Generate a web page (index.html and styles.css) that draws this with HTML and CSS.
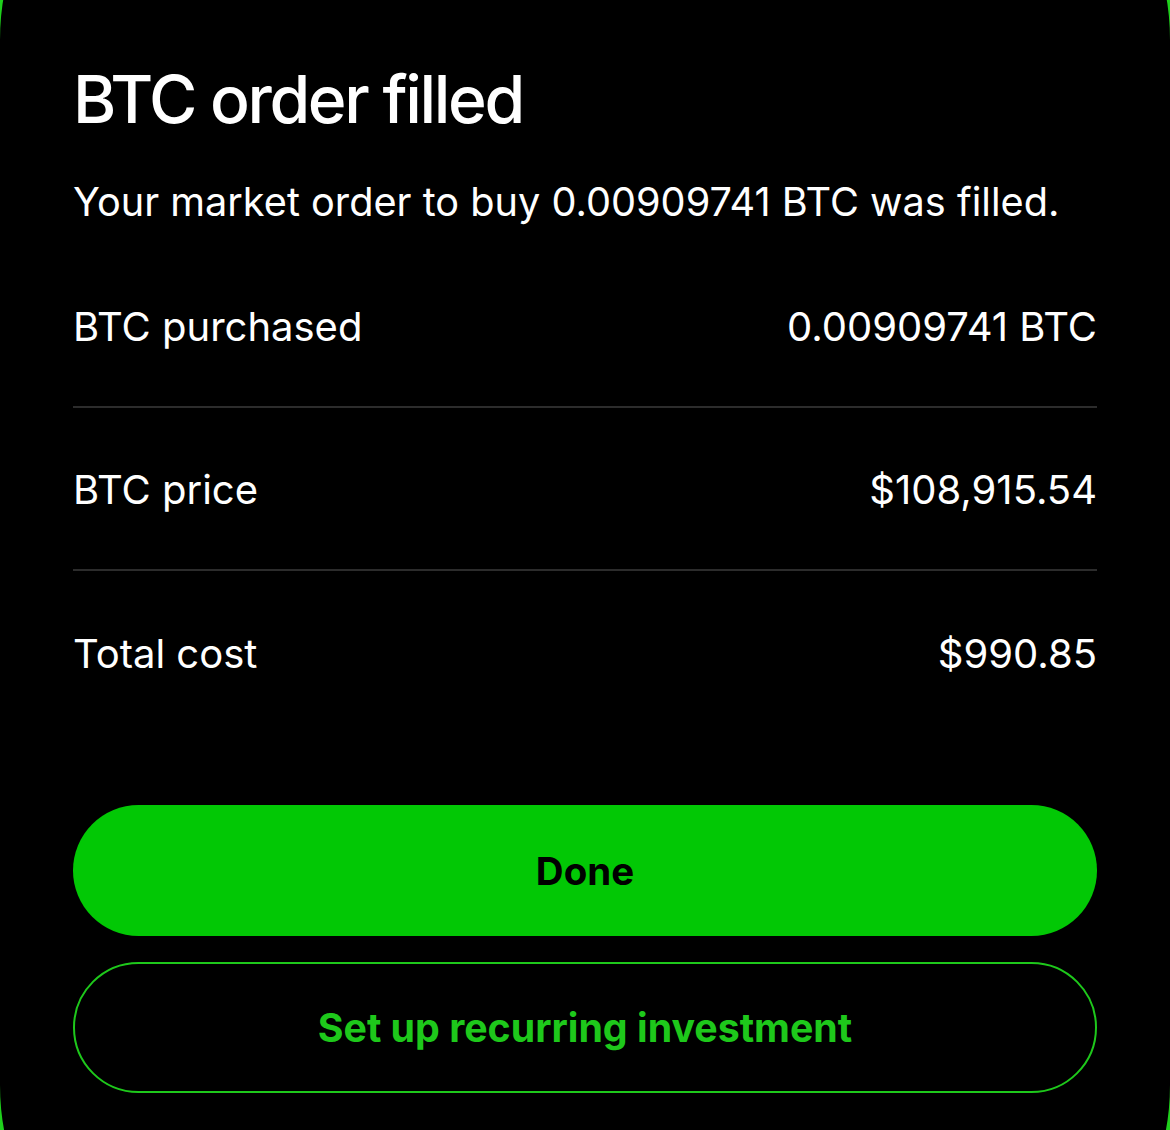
FILE: index.html
```html
<!DOCTYPE html>
<html lang="en">
<head>
<meta charset="utf-8">
<title>BTC order filled</title>
<link rel="stylesheet" href="styles.css">
</head>
<body>
<div class="sheet-edge"></div>
<main class="sheet">
  <h1 class="title">BTC order filled</h1>
  <p class="subtitle">Your market order to buy 0.00909741 BTC was filled.</p>
  <section class="details">
    <div class="row"><span>BTC purchased</span><span>0.00909741 BTC</span></div>
    <div class="row"><span>BTC price</span><span>$108,915.54</span></div>
    <div class="row"><span>Total cost</span><span>$990.85</span></div>
  </section>
  <div class="actions">
    <button class="btn btn-primary">Done</button>
    <button class="btn btn-outline">Set up recurring investment</button>
  </div>
</main>
</body>
</html>
```
FILE: styles.css
```css
html, body {
  margin: 0;
  padding: 0;
  background: #000;
  height: 100%;
  overflow: hidden;
}
body {
  font-family: Inter, "Noto Sans", sans-serif;
  color: #fff;
}
.sheet-edge {
  position: fixed;
  left: -4px;
  top: -215px;
  width: 1178px;
  height: 1555px;
  box-sizing: border-box;
  border: 4px solid #1fd01c;
  border-radius: 255px;
  pointer-events: none;
}
.sheet {
  display: flex;
  flex-direction: column;
  padding: 59px 73px 0 73px;
}
.title {
  margin: 0;
  font-size: 66px;
  font-weight: 500;
  line-height: 80px;
  letter-spacing: -2.4px;
}
.subtitle {
  margin: 38px 0 0 0;
  font-size: 39.7px;
  font-weight: 400;
  line-height: 50px;
}
.details {
  display: flex;
  flex-direction: column;
  margin-top: 55px;
}
.row {
  display: flex;
  justify-content: space-between;
  align-items: center;
  height: 163px;
  font-size: 40px;
  border-bottom: 2px solid #2c2c2c;
  box-sizing: border-box;
  padding-top: 2px;
}
.row:first-child {
  height: 126px;
  padding-top: 0;
  padding-bottom: 36px;
}
.row:last-child {
  border-bottom: none;
}
.actions {
  display: flex;
  flex-direction: column;
  gap: 26px;
  margin-top: 71px;
}
.btn {
  font-family: inherit;
  height: 131px;
  border-radius: 66px;
  font-size: 38.5px;
  font-weight: 700;
  cursor: pointer;
}
.btn-primary {
  background: #02c805;
  color: #000;
  border: none;
}
.btn-outline {
  background: transparent;
  color: #1ec81b;
  border: 2px solid #1ec81b;
  font-size: 39.3px;
}
```
